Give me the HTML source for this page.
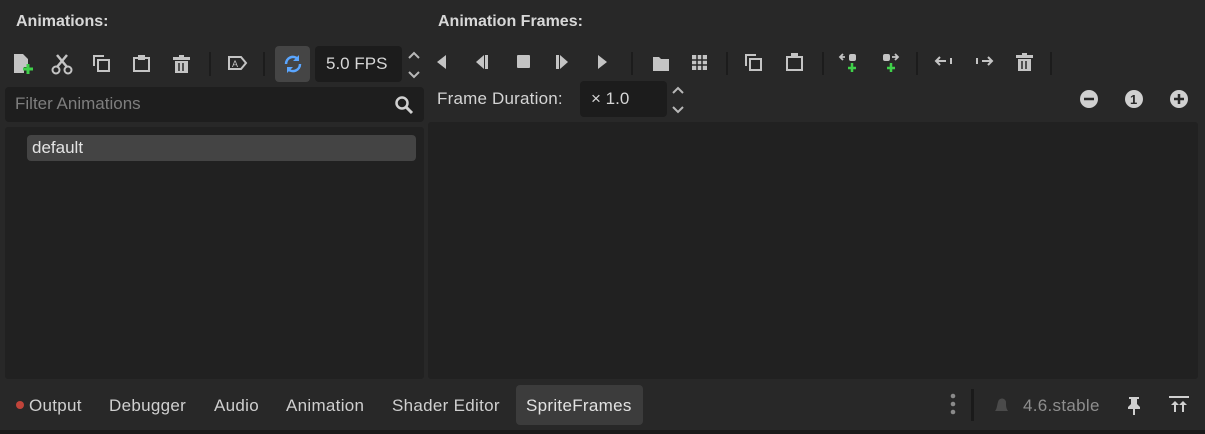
<!DOCTYPE html><html><head><style>
*{margin:0;padding:0;box-sizing:border-box}
body{width:1205px;height:434px;background:#282828;font-family:"Liberation Sans",sans-serif;color:#dcdcdc;position:relative;overflow:hidden}
.a{position:absolute}
.t{font-size:16px;font-weight:bold;color:#d8d8d8}
svg{position:absolute}
.ic{fill:#c4c4c4;stroke:none}
.sep{position:absolute;width:2px;height:24px;background:#1c1c1c}
.tab{position:absolute;top:396px;font-size:17px;color:#cfcfcf;letter-spacing:0.3px}
</style></head><body>
<div class="a t" style="left:16px;top:13px">Animations:</div>
<div class="a t" style="left:438px;top:13px">Animation Frames:</div>

<svg style="left:12px;top:52px" width="22" height="24"><path class="ic" d="M2 2h9l5 5v8h-4v6H2z"/><path d="M16 12v10M11 17h10" stroke="#3fd04a" stroke-width="3"/></svg>
<svg style="left:51px;top:53px" width="22" height="22"><path d="M6 2l10 12M16 2L6 14" stroke="#c4c4c4" stroke-width="2.5"/><circle cx="5" cy="17" r="3.5" fill="none" stroke="#c4c4c4" stroke-width="2"/><circle cx="17" cy="17" r="3.5" fill="none" stroke="#c4c4c4" stroke-width="2"/></svg>
<svg style="left:92px;top:54px" width="20" height="20"><path d="M2 12V2h10" fill="none" stroke="#c4c4c4" stroke-width="2"/><rect x="6" y="6" width="11" height="11" fill="none" stroke="#c4c4c4" stroke-width="2"/></svg>
<svg style="left:132px;top:54px" width="20" height="20"><rect x="2" y="4" width="15" height="13" fill="none" stroke="#c4c4c4" stroke-width="2"/><rect x="6" y="1" width="7" height="5" fill="#c4c4c4"/></svg>
<svg style="left:172px;top:54px" width="20" height="20"><path class="ic" d="M1 3h17v3H1zM7 1h5v2H7zM3 7h13v12H3z"/><path d="M7 9v8M11 9v8" stroke="#282828" stroke-width="1.5"/></svg>
<div class="sep" style="left:209px;top:52px"></div>
<svg style="left:227px;top:55px" width="22" height="18"><path d="M2 2h12l5 6-5 6H2z" fill="none" stroke="#c4c4c4" stroke-width="2"/><text x="5" y="12" font-size="9" fill="#c4c4c4" font-family="Liberation Sans">A</text></svg>
<div class="sep" style="left:263px;top:52px"></div>
<div class="a" style="left:275px;top:46px;width:35px;height:36px;background:#454545;border-radius:4px"></div>
<svg style="left:282px;top:53px" width="22" height="22"><path d="M4 11a7 7 0 0 1 12-5M18 11a7 7 0 0 1-12 5" fill="none" stroke="#5aa6ff" stroke-width="2.5"/><path d="M17 2v6h-6zM5 20v-6h6z" fill="#5aa6ff"/></svg>
<div class="a" style="left:315px;top:46px;width:87px;height:36px;background:#1c1c1c;border-radius:4px;font-size:17px;padding:8px 0 0 11px;color:#d6d6d6">5.0 FPS</div>
<svg style="left:406px;top:48px" width="16" height="34"><path d="M3 10l5-5 5 5M3 24l5 5 5-5" fill="none" stroke="#b8b8b8" stroke-width="2"/></svg>

<div class="a" style="left:5px;top:87px;width:419px;height:35px;background:#1e1e1e;border-radius:4px;font-size:17px;color:#7e7e7e;padding:7px 0 0 10px">Filter Animations</div>
<svg style="left:394px;top:95px" width="20" height="20"><circle cx="8" cy="8" r="5.5" fill="none" stroke="#d0d0d0" stroke-width="2.5"/><path d="M12 12l6 6" stroke="#d0d0d0" stroke-width="3"/></svg>
<div class="a" style="left:5px;top:127px;width:419px;height:252px;background:#212121;border-radius:3px"></div>
<div class="a" style="left:27px;top:135px;width:389px;height:26px;background:#444;border-radius:4px;font-size:17px;color:#e4e4e4;padding:3px 0 0 5px">default</div>

<svg style="left:436px;top:52px" width="640" height="24"><g class="ic">
<path d="M1 10l9-7v14z"/>
<path d="M40 10l8-7v14z"/><rect x="49" y="3" width="3" height="14"/>
<rect x="81" y="3" width="13" height="13" rx="1"/>
<rect x="120" y="3" width="3" height="14"/><path d="M124 3l8 7-8 7z"/>
<path d="M162 3l9 7-9 7z"/>
<path d="M217 5h6l2 2h8v12h-16z"/>
<path d="M256 3h15v15h-15z"/>
</g>
<path d="M261 3v15M266 3v15M256 8h15M256 13h15" stroke="#282828" stroke-width="1.5"/>
<rect x="195" y="-1" width="2" height="24" fill="#1c1c1c"/>
<rect x="290" y="-1" width="2" height="24" fill="#1c1c1c"/>
<path d="M310 14V3h10" fill="none" stroke="#c4c4c4" stroke-width="2"/><rect x="314" y="7" width="11" height="11" fill="none" stroke="#c4c4c4" stroke-width="2"/>
<rect x="351" y="5" width="15" height="13" fill="none" stroke="#c4c4c4" stroke-width="2"/><rect x="355" y="1" width="7" height="5" fill="#c4c4c4"/>
<rect x="386" y="-1" width="2" height="24" fill="#1c1c1c"/>
<rect x="413" y="2" width="7" height="7" rx="2" fill="#c4c4c4"/><path d="M404 5h5M407 2l-3 3 3 3" fill="none" stroke="#c4c4c4" stroke-width="1.8"/><path d="M416 11v9M412 16h8" stroke="#3fd04a" stroke-width="2.5"/>
<rect x="447" y="2" width="7" height="7" rx="2" fill="#c4c4c4"/><path d="M456 5h6M459 2l3 3-3 3" fill="none" stroke="#c4c4c4" stroke-width="1.8"/><path d="M455 11v9M451 16h8" stroke="#3fd04a" stroke-width="2.5"/>
<rect x="480" y="-1" width="2" height="24" fill="#1c1c1c"/>
<path d="M500 9h10M504 5l-4 4 4 4M515 6v6" fill="none" stroke="#c4c4c4" stroke-width="2"/>
<path d="M546 9h10M552 5l4 4-4 4M541 6v6" fill="none" stroke="#c4c4c4" stroke-width="2"/>
<path class="ic" d="M580 3h17v3h-17zM586 1h5v2h-5zM582 7h13v12h-13z"/><path d="M586 9v8M590 9v8" stroke="#282828" stroke-width="1.5"/>
<rect x="614" y="-1" width="2" height="24" fill="#1c1c1c"/>
</svg>

<div class="a" style="left:437px;top:89px;font-size:17px;color:#d4d4d4;letter-spacing:0.2px">Frame Duration:</div>
<div class="a" style="left:580px;top:81px;width:87px;height:36px;background:#1c1c1c;border-radius:4px;font-size:17px;padding:8px 0 0 11px;color:#d6d6d6">× 1.0</div>
<svg style="left:670px;top:83px" width="16" height="34"><path d="M3 10l5-5 5 5M3 24l5 5 5-5" fill="none" stroke="#b8b8b8" stroke-width="2"/></svg>
<svg style="left:1078px;top:88px" width="112" height="22"><circle cx="11" cy="11" r="9" fill="#d0d0d0"/><path d="M6 11h10" stroke="#282828" stroke-width="2.5"/><circle cx="56" cy="11" r="9" fill="#d0d0d0"/><text x="52" y="16" font-size="13" font-weight="bold" fill="#282828" font-family="Liberation Sans">1</text><circle cx="101" cy="11" r="9" fill="#d0d0d0"/><path d="M96 11h10M101 6v10" stroke="#282828" stroke-width="2.5"/></svg>
<div class="a" style="left:428px;top:122px;width:770px;height:257px;background:#212121;border-radius:3px"></div>

<div class="a" style="left:0;top:430px;width:1205px;height:4px;background:#1a1a1a"></div>
<div class="a" style="left:16px;top:401px;width:8px;height:8px;border-radius:50%;background:#c0443a"></div>
<div class="tab" style="left:29px">Output</div>
<div class="tab" style="left:109px">Debugger</div>
<div class="tab" style="left:214px">Audio</div>
<div class="tab" style="left:286px">Animation</div>
<div class="tab" style="left:392px">Shader Editor</div>
<div class="a" style="left:516px;top:385px;width:127px;height:40px;background:#3c3c3c;border-radius:4px"></div>
<div class="tab" style="left:526px;color:#e2e2e2">SpriteFrames</div>
<svg style="left:946px;top:392px" width="14" height="26"><circle cx="7" cy="4" r="2.3" fill="#8a8a8a"/><circle cx="7" cy="12" r="2.3" fill="#8a8a8a"/><circle cx="7" cy="20" r="2.3" fill="#8a8a8a"/></svg>
<div class="a" style="left:971px;top:389px;width:3px;height:32px;background:#1a1a1a"></div>
<svg style="left:991px;top:395px" width="20" height="20"><path d="M4 16c2-2 2-6 3-9a4 4 0 0 1 8 1c0 3 0 5 2 8z" fill="#4a4a4a"/></svg>
<div class="tab" style="left:1023px;color:#8e8e8e">4.6.stable</div>
<svg style="left:1125px;top:395px" width="18" height="22"><path d="M4 2h10v2h-2v5l3 3v2H3v-2l3-3V4H4z" fill="#d0d0d0"/><path d="M9 14v6" stroke="#d0d0d0" stroke-width="2"/></svg>
<svg style="left:1168px;top:395px" width="22" height="20"><path d="M1 2h20" stroke="#d0d0d0" stroke-width="2"/><path d="M7 8v9M15 8v9" stroke="#d0d0d0" stroke-width="2"/><path d="M3 10l4-4 4 4zM11 10l4-4 4 4z" fill="#d0d0d0"/></svg>
</body></html>
